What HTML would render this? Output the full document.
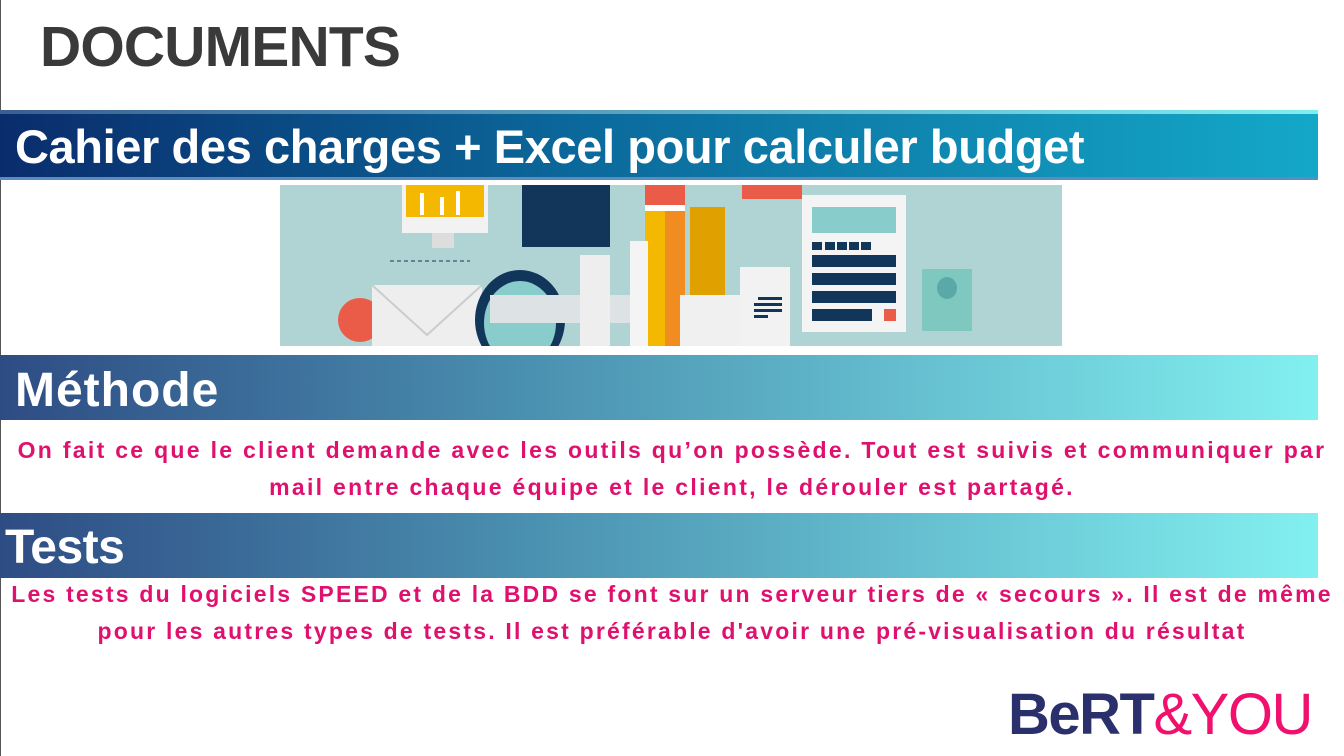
<!DOCTYPE html>
<html><head><meta charset="utf-8"><style>
body{margin:0;width:1344px;height:756px;background:#fff;position:relative;overflow:hidden;font-family:"Liberation Sans",sans-serif}
.abs{position:absolute}
.h{font-weight:bold;color:#fff;white-space:nowrap}
.p{position:absolute;left:0;width:1344px;text-align:center;color:#e0106e;font-weight:bold;font-size:23px;line-height:37px;letter-spacing:2.3px;white-space:nowrap}
</style></head><body>
<div class="abs" style="left:0;top:0;width:1px;height:756px;background:#555"></div>
<div class="abs" style="left:40px;top:14px;font-size:57px;font-weight:bold;color:#3a3a3a;letter-spacing:-0.8px">DOCUMENTS</div>
<div class="abs" style="left:0;top:110px;width:1318px;height:4px;background:linear-gradient(90deg,#3a5f90,#80eef0)"></div>
<div class="abs" style="left:0;top:114px;width:1318px;height:63px;background:linear-gradient(90deg,#0a2c6c,#0b6a9c 45%,#14a8c8)"></div>
<div class="abs" style="left:0;top:177px;width:1318px;height:3px;background:#5a8cc0"></div>
<div class="abs h" style="left:15px;top:119px;font-size:47px;letter-spacing:-0.4px">Cahier des charges + Excel pour calculer budget</div>
<svg class="abs" style="left:280px;top:185px" width="782" height="161" viewBox="0 0 782 161">
<rect width="782" height="161" fill="#b0d4d4"/>
<rect x="122" y="0" width="86" height="48" fill="#f2f2f2"/><rect x="126" y="0" width="78" height="32" fill="#f5b800"/>
<rect x="140" y="8" width="4" height="22" fill="#fff"/><rect x="160" y="12" width="4" height="18" fill="#fff"/><rect x="176" y="6" width="4" height="24" fill="#fff"/>
<rect x="152" y="48" width="22" height="15" fill="#ddd"/>
<rect x="242" y="0" width="88" height="62" fill="#12365a"/>
<rect x="365" y="0" width="40" height="161" fill="#f5b800"/><rect x="385" y="0" width="20" height="161" fill="#f08c20"/><rect x="365" y="0" width="40" height="20" fill="#ea5c48"/><rect x="365" y="20" width="40" height="6" fill="#fff"/>
<rect x="410" y="22" width="35" height="139" fill="#e0a000"/>
<rect x="462" y="0" width="60" height="14" fill="#ea5c48"/>
<rect x="522" y="10" width="104" height="137" fill="#f4f4f4"/><rect x="532" y="22" width="84" height="26" fill="#88cccc"/>
<g fill="#12365a"><rect x="532" y="57" width="10" height="8"/><rect x="545" y="57" width="10" height="8"/><rect x="557" y="57" width="10" height="8"/><rect x="569" y="57" width="10" height="8"/><rect x="581" y="57" width="10" height="8"/>
<rect x="532" y="70" width="84" height="12"/><rect x="532" y="88" width="84" height="12"/><rect x="532" y="106" width="84" height="12"/><rect x="532" y="124" width="60" height="12"/></g>
<rect x="604" y="124" width="12" height="12" fill="#ea5c48"/>
<rect x="642" y="84" width="50" height="62" fill="#7ec8c0"/><ellipse cx="667" cy="103" rx="10" ry="11" fill="#5aa8a8"/>
<circle cx="80" cy="135" r="22" fill="#ea5c48"/>
<rect x="92" y="100" width="110" height="61" fill="#eeeeee"/><path d="M92 100 L147 150 L202 100" fill="none" stroke="#ccc" stroke-width="2"/>
<ellipse cx="240" cy="135" rx="45" ry="50" fill="#12365a"/><ellipse cx="240" cy="138" rx="36" ry="42" fill="#88cccc"/>
<rect x="210" y="110" width="140" height="28" fill="#dde2e4"/><rect x="300" y="70" width="30" height="91" fill="#eeeeee"/><rect x="350" y="56" width="18" height="105" fill="#f4f4f4"/>
<rect x="400" y="110" width="80" height="51" fill="#f0f0f0"/><rect x="460" y="82" width="50" height="79" fill="#f2f2f2"/>
<g fill="#12365a"><rect x="478" y="112" width="24" height="3"/><rect x="474" y="118" width="28" height="3"/><rect x="474" y="124" width="28" height="3"/><rect x="474" y="130" width="14" height="3"/></g>
<line x1="110" y1="76" x2="190" y2="76" stroke="#12365a" stroke-dasharray="4 3"/>
</svg>
<div class="abs" style="left:0;top:355px;width:1318px;height:65px;background:linear-gradient(90deg,#2e4c84,#4a90b0 40%,#82f0f0)"></div>
<div class="abs h" style="left:15px;top:363px;font-size:48px;letter-spacing:1px">Méthode</div>
<div class="p" style="top:432px">On fait ce que le client demande avec les outils qu’on possède. Tout est suivis et communiquer par<br>mail entre chaque équipe et le client, le dérouler est partagé.</div>
<div class="abs" style="left:0;top:513px;width:1318px;height:65px;background:linear-gradient(90deg,#2e4c84,#4a90b0 40%,#82f0f0)"></div>
<div class="abs h" style="left:5px;top:520px;font-size:48px;letter-spacing:-0.5px">Tests</div>
<div class="p" style="top:576px;letter-spacing:2.2px">Les tests du logiciels SPEED et de la BDD se font sur un serveur tiers de « secours ». Il est de même<br>pour les autres types de tests. Il est préférable d'avoir une pré-visualisation du résultat</div>
<div class="abs" style="left:1008px;top:686px;font-size:58px;line-height:58px;white-space:nowrap;letter-spacing:-1.5px"><span style="color:#2a306c;font-weight:bold">BeRT</span><span style="color:#f0106e">&amp;YOU</span></div>
</body></html>
